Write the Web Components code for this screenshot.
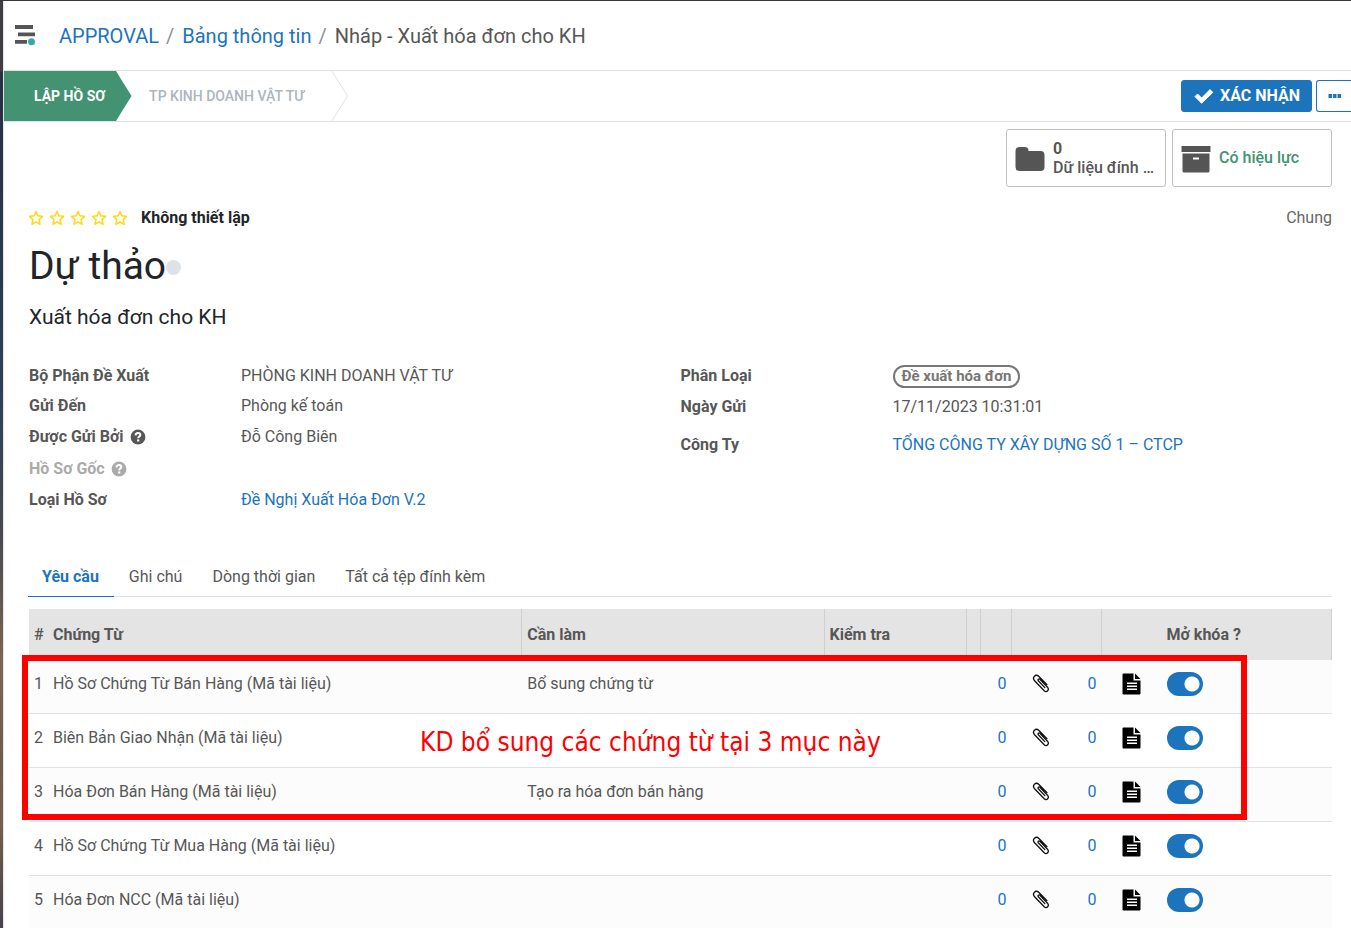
<!DOCTYPE html>
<html lang="vi">
<head>
<meta charset="utf-8">
<meta name="viewport" content="width=device-width, initial-scale=1">
<title>Nháp - Xuất hóa đơn cho KH</title>
<style>
  html { scrollbar-width: none; }
  body {
    margin: 0; background: #fff; color: #575757;
    font: 16px/24px Roboto, "Liberation Sans", sans-serif;
    --blue: #1c74bd; --green: #439272; --line: #dee2e6; --dark: #212529;
  }
</style>
</head>
<body>
<app-shell>
  <app-breadcrumb slot="top" current="Nháp - Xuất hóa đơn cho KH">
    <a href="#approval">APPROVAL</a>
    <a href="#board">Bảng thông tin</a>
  </app-breadcrumb>
  <status-bar slot="status">
    <status-step active>LẬP HỒ SƠ</status-step>
    <status-step>TP KINH DOANH VẬT TƯ</status-step>
    <action-buttons slot="actions">XÁC NHẬN</action-buttons>
  </status-bar>
  <stat-group>
    <stat-button icon="folder"><b slot="value">0</b>Dữ liệu đính kèm</stat-button>
    <stat-button icon="archive" tone="green">Có hiệu lực</stat-button>
  </stat-group>
  <record-header heading="Dự thảo" sub="Xuất hóa đơn cho KH" scope="Chung" rating="Không thiết lập"></record-header>
  <field-grid>
    <field-column>
      <form-field label="Bộ Phận Đề Xuất">PHÒNG KINH DOANH VẬT TƯ</form-field>
      <form-field label="Gửi Đến">Phòng kế toán</form-field>
      <form-field label="Được Gửi Bởi" help>Đỗ Công Biên</form-field>
      <form-field label="Hồ Sơ Gốc" help muted></form-field>
      <form-field label="Loại Hồ Sơ" href="#type">Đề Nghị Xuất Hóa Đơn V.2</form-field>
    </field-column>
    <field-column>
      <form-field label="Phân Loại" pill>Đề xuất hóa đơn</form-field>
      <form-field label="Ngày Gửi" medium>17/11/2023 10:31:01</form-field>
      <form-field label="Công Ty" tall href="#company">TỔNG CÔNG TY XÂY DỰNG SỐ 1 – CTCP</form-field>
    </field-column>
  </field-grid>
  <tab-strip>
    <button role="tab" aria-selected="true">Yêu cầu</button>
    <button role="tab" aria-selected="false">Ghi chú</button>
    <button role="tab" aria-selected="false">Dòng thời gian</button>
    <button role="tab" aria-selected="false">Tất cả tệp đính kèm</button>
  </tab-strip>
  <callout-frame>
    <document-table></document-table>
    <span slot="note">KD bổ sung các chứng từ tại 3 mục này</span>
  </callout-frame>
</app-shell>

<script>
const ICONS = {
  check: '<svg width="20" height="16" viewBox="0 0 20 16"><path d="M1 8.6 3.6 6 7.6 10 16 1.6 18.8 4.4 7.6 15.2z" fill="currentColor" stroke="currentColor" stroke-linejoin="round"/></svg>',
  folder: '<svg width="30" height="26" viewBox="0 0 30 26"><path d="M4.500 1H9.500Q13.500 1 13.500 4.500V5H25.500Q29.500 5 29.500 9V21Q29.500 25 25.500 25H4.500Q.5 25 .5 21V5Q.5 1 4.500 1Z" fill="#555"/></svg>',
  archive: '<svg width="30" height="28" viewBox="0 0 30 28"><path d="M.5 1H29.500V7H.5Z" fill="#555"/><path fill-rule="evenodd" d="M1.500 8.500H28.500V26Q28.500 27.500 27 27.500H3Q1.500 27.500 1.500 26ZM12 12.500V14.500H18V12.500Z" fill="#555"/></svg>',
  star: '<svg width="16" height="16" viewBox="0 0 16 16"><path d="M8 1.600 9.900 5.800 14.500 6.400 11.100 9.600 12 14.200 8 11.900 4 14.200 4.900 9.600 1.500 6.400 6.100 5.800Z" fill="none" stroke="#fbdc1c" stroke-width="1.600" stroke-linejoin="round"/></svg>',
  help: '<svg width="16" height="16" viewBox="0 0 16 16"><circle cx="8" cy="8" r="7.400" fill="currentColor"/><path d="M5.500 6.300C5.800 4.600 6.900 4.100 8.100 4.100 9.600 4.100 10.300 5 10.300 5.900 10.300 7.400 8.200 7.600 8.200 9.300" fill="none" stroke="#fff" stroke-width="2"/><path d="M7.100 10.400H9.300V12.500H7.100Z" fill="#fff"/></svg>',
  clip: '<svg width="18" height="20" viewBox="0 0 18 20"><path d="M12.800 13.600 6.300 6.700C5.300 5.600 6.900 4.300 7.900 5.300L15.500 13.300C17.700 15.700 14.700 19.100 12.200 16.800L2.600 6.700C-.4 3.300 3.800-.6 6.900 2.500L15 10.600" fill="none" stroke="#111" stroke-width="1.300" stroke-linecap="round"/></svg>',
  doc: '<svg width="20" height="22" viewBox="0 0 20 22"><path fill-rule="evenodd" d="M1.500 .5H11.500V7.500H18.500V20.500Q18.500 21.500 17.500 21.500H1.500Q.5 21.500 .5 20.500V1.500Q.5 .5 1.500 .5ZM5 9.500V11H15V9.500ZM5 12.500V14H15V12.500ZM5 15.500V17H15V15.500Z" fill="#000"/><path d="M13 .5 18.500 6H13Z" fill="#000"/></svg>'
};

class Base extends HTMLElement {
  connectedCallback() {
    if (this.shadowRoot) return;
    this.attachShadow({ mode: 'open' }).innerHTML =
      `<style>*{box-sizing:border-box}svg{display:block;flex:none}a{color:var(--blue);text-decoration:none}button{font:inherit;color:inherit;margin:0;cursor:pointer}${this.css()}</style>${this.html()}`;
  }
  css() { return ''; }
  html() { return '<slot></slot>'; }
}

customElements.define('app-shell', class extends Base {
  css() { return `
    :host{display:grid;grid-template-columns:3px minmax(0,1fr);min-height:100vh;border-top:1px solid #38383c;box-sizing:border-box}
    .edge{background:linear-gradient(#3f3f41 0 70px,#26303e 71px,#2d4157 400px,#4a4a50 540px,#7b6650 660px,#6d5c50 760px,#75604b 820px,#45414a 928px)}
    .page{border-left:1px solid #e2e4e8}
    main{padding:7px 19px 0 25px}`; }
  html() { return `<div class="edge"></div><div class="page"><slot name="top"></slot><slot name="status"></slot><main><slot></slot></main></div>`; }
});

customElements.define('app-breadcrumb', class extends Base {
  css() { return `
    :host{display:block}
    header{display:flex;align-items:center;gap:24px;height:69px;padding:0 11px}
    button{border:0;background:none;padding:0}
    nav{display:flex;font-size:20px;line-height:28px;white-space:pre}
    i{font-style:normal;color:#8b8f94;margin:0 8px 0 7px}`; }
  html() {
    const links = [...this.querySelectorAll('a')].map(a => `<a href="${a.getAttribute('href')}">${a.textContent}</a><i>/</i>`).join('');
    return `<header><button aria-label="Menu"><svg width="20" height="22" viewBox="0 0 20 22"><path d="M0 0H18V4H0ZM3 7.500H20V11.300H3ZM0 15H12V18.800H0Z" fill="#555"/><circle cx="16.500" cy="16.700" r="3.500" fill="#3aa6a9"/></svg></button>
      <nav aria-label="Breadcrumb">${links}<span>${this.getAttribute('current')}</span></nav></header>`;
  }
});

customElements.define('status-bar', class extends Base {
  css() { return `
    :host{display:flex;justify-content:space-between;align-items:center;height:52px;border:solid var(--line);border-width:1px 0;box-sizing:border-box}
    .steps{display:flex}`; }
  html() { return `<div class="steps"><slot></slot></div><slot name="actions"></slot>`; }
});

customElements.define('status-step', class extends Base {
  css() { return `
    :host{display:flex;height:50px;font-size:14px;font-weight:500;line-height:50px;color:#adb5bd;white-space:nowrap}
    span{padding:0 28px 0 17px}
    :host([active]){color:#fff;font-weight:700}
    :host([active]) span{background:var(--green);padding:0 11px 0 30px}`; }
  html() {
    const on = this.hasAttribute('active');
    return `<span><slot></slot></span><svg width="16" height="50" viewBox="0 0 16 50"><path d="M0 0 15.500 25 0 50" fill="${on ? '#439272' : 'none'}" stroke="${on ? 'none' : '#dee2e6'}"/></svg>`;
  }
});

customElements.define('action-buttons', class extends Base {
  css() { return `
    :host{display:flex;gap:4px}
    button{height:32px;border:1px solid var(--blue);border-radius:3px;font-weight:700;white-space:nowrap}
    .ok{display:flex;align-items:center;gap:6px;padding:0 11px 0 12px;background:var(--blue);color:#fff}
    .more{width:35px;padding:0 0 0 11px;background:#fff;color:var(--blue);border-right:0;border-radius:3px 0 0 3px}`; }
  html() { return `<button class="ok">${ICONS.check}<slot></slot></button><button class="more" aria-label="Thêm"><svg width="14" height="4" viewBox="0 0 14 4"><path d="M.5 0H4V4H.5ZM5 0H8.500V4H5ZM9.500 0H13V4H9.500Z" fill="currentColor"/></svg></button>`; }
});

customElements.define('stat-group', class extends Base {
  css() { return `:host{display:flex;justify-content:flex-end;gap:6px}`; }
});

customElements.define('stat-button', class extends Base {
  css() { return `
    :host{display:block;width:160px}
    button{display:flex;align-items:center;gap:8px;width:100%;height:58px;padding:0 8px;border:1px solid #bfbfbf;border-radius:3px;background:#fff;text-align:left;font-weight:500;line-height:19px}
    svg{margin-top:2px}
    span{min-width:0}
    .t{display:block;overflow:hidden;text-overflow:ellipsis;white-space:nowrap}
    ::slotted(b){display:block;font-weight:700}
    :host([tone=green]) span{color:var(--green)}
    :host([tone=green]) span.box{padding-bottom:2px}`; }
  html() { return `<button>${ICONS[this.getAttribute('icon')]}<span class="box"><slot name="value"></slot><span class="t"><slot></slot></span></span></button>`; }
});

customElements.define('record-header', class extends Base {
  css() { return `
    :host{display:block;color:var(--dark);padding-top:19px}
    .top{display:flex;align-items:center;justify-content:space-between}
    .rate{display:flex;align-items:center;gap:13px}
    .stars{display:flex;gap:5px;margin-left:-1px}
    .stars button{border:0;padding:0;background:none;width:16px}
    .scope{color:#666}
    .title{display:flex;align-items:center;padding-top:12px}
    h1{margin:0;font-size:39px;line-height:48px;font-weight:400}
    .dot{width:15px;height:15px;border-radius:50%;background:var(--line);margin-top:2px}
    h2{margin:0;padding:13px 0 30px;font-size:21px;line-height:28px;font-weight:400}`; }
  html() {
    const stars = [1,2,3,4,5].map(n => `<button aria-label="${n}">${ICONS.star}</button>`).join('');
    return `<div class="top"><div class="rate"><div class="stars">${stars}</div><b>${this.getAttribute('rating')}</b></div><span class="scope">${this.getAttribute('scope')}</span></div>
      <div class="title"><h1>${this.getAttribute('heading')}</h1><span class="dot"></span></div><h2>${this.getAttribute('sub')}</h2>`;
  }
});

customElements.define('field-grid', class extends Base {
  css() { return `:host{display:grid;grid-template-columns:1fr 1fr;padding-bottom:42px}`; }
});
customElements.define('field-column', class extends Base {
  css() { return `:host{display:block}`; }
});

customElements.define('form-field', class extends Base {
  css() { return `
    :host{display:grid;grid-template-columns:212px minmax(0,1fr);align-items:center;height:30px}
    :host([help]),:host([medium]){height:32px}
    :host([tall]){height:44px}
    .label{display:flex;align-items:center;gap:6px;font-weight:700}
    :host([muted]) .label{color:#aaa}
    .pill{display:inline-block;border:2px solid #777;border-radius:12px;padding:0 7px;font-size:15px;line-height:19px;font-weight:700;color:#777}`; }
  html() {
    const href = this.getAttribute('href');
    const value = href ? `<a href="${href}"><slot></slot></a>` : this.hasAttribute('pill') ? `<span class="pill"><slot></slot></span>` : '<slot></slot>';
    return `<div class="label">${this.getAttribute('label')}${this.hasAttribute('help') ? ICONS.help : ''}</div><div>${value}</div>`;
  }
});

customElements.define('tab-strip', class extends Base {
  css() { return `
    :host{display:flex;border-bottom:1px solid var(--line);margin-left:-1px}
    ::slotted(button){font:inherit;color:inherit;border:0;border-bottom:1px solid transparent;background:none;margin:0 0 -1px;padding:8px 15px 7px;cursor:pointer}
    ::slotted([aria-selected=true]){color:var(--blue);font-weight:700;border-color:var(--blue);padding-left:14px}`; }
  connectedCallback() { super.connectedCallback(); this.setAttribute('role', 'tablist'); }
});

customElements.define('callout-frame', class extends Base {
  css() { return `
    :host{display:block;position:relative;margin-top:12px}
    .frame{position:absolute;left:-7px;top:46px;width:94%;height:165px;border:6px solid #f00;pointer-events:none;
      display:flex;align-items:center;justify-content:center;color:#f00;font:26px/36px "DejaVu Sans Condensed","Noto Sans",sans-serif;padding:8px 0 0 32px}`; }
  html() { return `<slot></slot><div class="frame"><slot name="note"></slot></div>`; }
});

customElements.define('toggle-switch', class extends Base {
  css() { return `
    :host{display:block}
    input{appearance:none;display:block;margin:0;width:36px;height:24px;border-radius:12px;background:#adb5bd;cursor:pointer}
    input:checked{background:radial-gradient(circle at 25px 12px,#fff 7px,var(--blue) 8px)}`; }
  html() { return `<input type="checkbox" role="switch" checked aria-label="${this.getAttribute('label')}">`; }
});

customElements.define('document-table', class extends Base {
  css() { return `
    :host{display:block}
    table{width:100%;border-collapse:separate;border-spacing:0;table-layout:fixed}
    th{height:51px;padding:0 5px;text-align:left;background:#e4e4e4;border-right:1px solid #cfcfcf;font-weight:700}
    th:first-child{border:0;font-weight:500}
    th:nth-last-child(2){border:0}
    td{height:54px;padding:0 5px 6px;border-bottom:1px solid var(--line)}
    tbody tr:nth-child(odd){background:#fcfcfc}
    td:first-child,th:first-child{padding-right:0}
    .n{text-align:right}
    td.i{padding:0 0 6px 20px}
    td.t{padding-bottom:6px}
    td button{display:block;border:0;padding:0;background:none}`; }
  html() {
    const rows = [
      ['Hồ Sơ Chứng Từ Bán Hàng (Mã tài liệu)', 'Bổ sung chứng từ'],
      ['Biên Bản Giao Nhận (Mã tài liệu)', ''],
      ['Hóa Đơn Bán Hàng (Mã tài liệu)', 'Tạo ra hóa đơn bán hàng'],
      ['Hồ Sơ Chứng Từ Mua Hàng (Mã tài liệu)', ''],
      ['Hóa Đơn NCC (Mã tài liệu)', '']
    ];
    const widths = ['19px', '36.4%', '23.2%', '10.9%', '14px', '31px', '60px', '30px', '60px', 'auto'];
    return `<table><colgroup>${widths.map(w => `<col style="width:${w}">`).join('')}</colgroup>
      <thead><tr><th>#</th><th>Chứng Từ</th><th>Cần làm</th><th>Kiểm tra</th><th></th><th></th><th colspan="2"></th><th></th><th>Mở khóa ?</th></tr></thead>
      <tbody>${rows.map(([name, todo], i) => `<tr><td>${i + 1}</td><td>${name}</td><td>${todo}</td><td></td><td></td>
        <td class="n"><a href="#files">0</a></td><td class="i"><button aria-label="Đính kèm">${ICONS.clip}</button></td>
        <td class="n"><a href="#docs">0</a></td><td class="i"><button aria-label="Tài liệu">${ICONS.doc}</button></td>
        <td class="t"><toggle-switch label="Mở khóa ${name}"></toggle-switch></td></tr>`).join('')}</tbody></table>`;
  }
});
</script>
</body>
</html>
